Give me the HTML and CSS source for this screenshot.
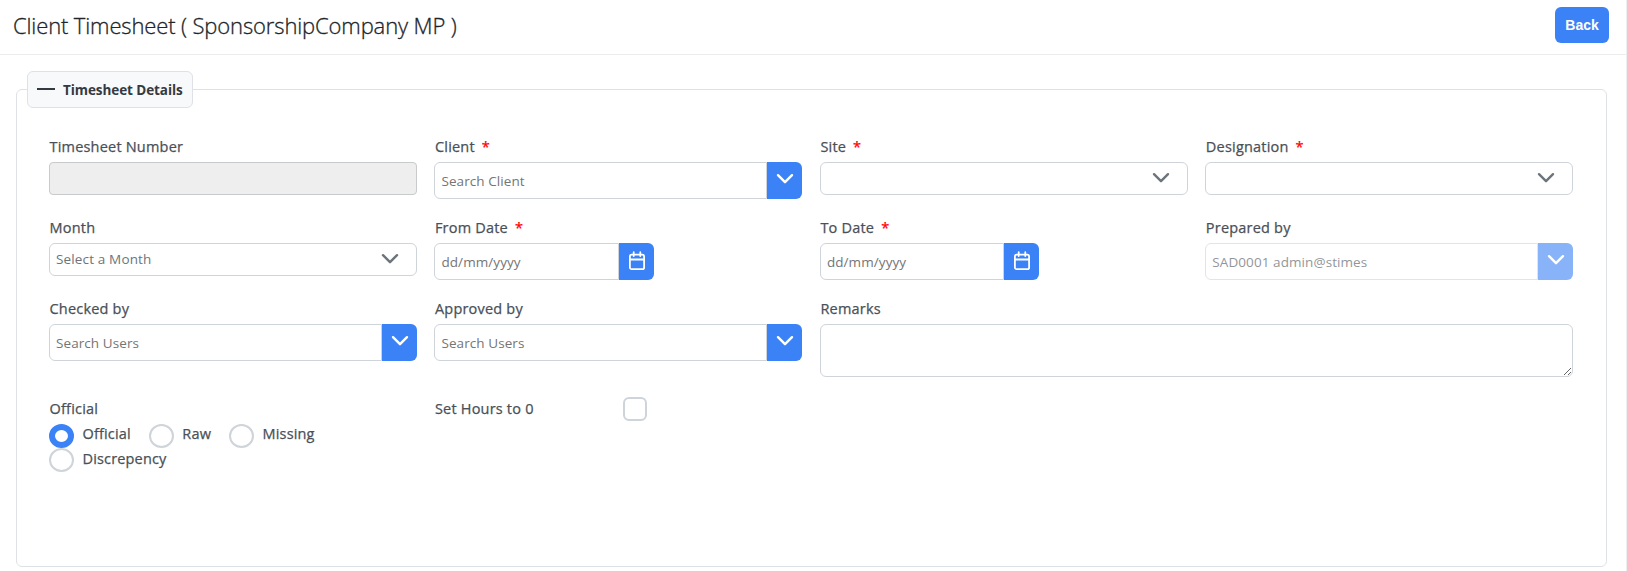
FILE: index.html
```
<!DOCTYPE html>
<html lang="en">
<head>
<meta charset="utf-8">
<title>Client Timesheet</title>
<link rel="stylesheet" href="styles.css">
</head>
<body>
<svg width="0" height="0" class="defs">
  <symbol id="chevron" viewBox="0 0 18 18"><path d="M2 5.2L9 12.2L16 5.2" fill="none" stroke="currentColor" stroke-width="2.4" stroke-linecap="round" stroke-linejoin="round"/></symbol>
  <symbol id="calendar" viewBox="0 0 18 20"><g fill="none" stroke="currentColor" stroke-width="1.8" stroke-linecap="round" stroke-linejoin="round"><rect x="1.9" y="3.6" width="14.2" height="14.6" rx="1.8"/><path d="M2 8.5H16M5.7 1.2V5M12.3 1.2V5"/></g></symbol>
</svg>
<div class="page">
  <header class="header">
    <h1 class="title">Client Timesheet ( SponsorshipCompany MP )</h1>
    <button class="back">Back</button>
  </header>
  <main class="main">
    <section class="panel">
      <button class="legend"><span class="minus"></span><span>Timesheet Details</span></button>
      <form class="grid">
        <div class="field"><label class="label">Timesheet Number</label><input class="input disabled" disabled></div>
        <div class="field"><label class="label">Client <span class="req">*</span></label>
          <div class="group"><input class="input" placeholder="Search Client"><button type="button" class="addon"><svg class="chev"><use href="#chevron"/></svg></button></div></div>
        <div class="field"><label class="label">Site <span class="req">*</span></label><div class="select"><span></span><svg class="chev"><use href="#chevron"/></svg></div></div>
        <div class="field"><label class="label">Designation <span class="req">*</span></label><div class="select"><span></span><svg class="chev"><use href="#chevron"/></svg></div></div>

        <div class="field"><label class="label">Month</label><div class="select"><span>Select a Month</span><svg class="chev"><use href="#chevron"/></svg></div></div>
        <div class="field"><label class="label">From Date <span class="req">*</span></label>
          <div class="group date"><input class="input" placeholder="dd/mm/yyyy"><button type="button" class="addon"><svg class="cal"><use href="#calendar"/></svg></button></div></div>
        <div class="field"><label class="label">To Date <span class="req">*</span></label>
          <div class="group date"><input class="input" placeholder="dd/mm/yyyy"><button type="button" class="addon"><svg class="cal"><use href="#calendar"/></svg></button></div></div>
        <div class="field"><label class="label">Prepared by</label>
          <div class="group faded"><input class="input" value="SAD0001 admin@stimes"><button type="button" class="addon"><svg class="chev"><use href="#chevron"/></svg></button></div></div>

        <div class="field"><label class="label">Checked by</label>
          <div class="group"><input class="input" placeholder="Search Users"><button type="button" class="addon"><svg class="chev"><use href="#chevron"/></svg></button></div></div>
        <div class="field"><label class="label">Approved by</label>
          <div class="group"><input class="input" placeholder="Search Users"><button type="button" class="addon"><svg class="chev"><use href="#chevron"/></svg></button></div></div>
        <div class="field wide"><label class="label">Remarks</label><textarea class="textarea"></textarea></div>

        <div class="field last"><label class="label">Official</label>
          <div class="radios">
            <label class="option"><span class="radio checked"></span><span>Official</span></label>
            <label class="option"><span class="radio"></span><span>Raw</span></label>
            <label class="option"><span class="radio"></span><span>Missing</span></label>
            <label class="option"><span class="radio"></span><span>Discrepency</span></label>
          </div></div>
        <div class="hours last"><label class="label">Set Hours to 0</label><span class="checkbox"></span></div>
      </form>
    </section>
  </main>
</div>
</body>
</html>
```
FILE: styles.css
```
* { box-sizing: border-box; }
body { margin: 0; background: #fff; color: #495057; font-family: "Open Sans", "Noto Sans", sans-serif; font-size: 14.5px; overflow: hidden; }
button { font: inherit; border: 0; padding: 0; }
.defs { position: absolute; }
.page { height: 571px; border-right: 1px solid #eceef2; }
.header { height: 55px; padding: 7px 17px 0 13px; display: flex; justify-content: space-between; align-items: flex-start; border-bottom: 1px solid #ececee; }
.title { margin: 0; font-size: 22px; line-height: 37px; font-weight: 300; color: #212529; letter-spacing: -.13px; white-space: nowrap; -webkit-text-stroke: .3px #212529; }
.back { width: 54px; height: 36px; border-radius: 6px; background: #3b82f6; color: #fff; font: 700 14px/35px "Liberation Sans", Arial, sans-serif; }
.main { padding: 34px 19px 0 16px; }
.panel { height: 478px; border: 1px solid #dee2e6; border-radius: 6px; padding: 0 33px 0 32px; }
.legend { display: flex; align-items: center; gap: 8px; width: 166px; height: 37px; margin: -19px 0 0 -22px; padding: 1px 0 0 9px; background: #f8f9fa; border: 1px solid #dee2e6; border-radius: 6px; font-weight: 700; font-size: 13.5px; letter-spacing: -.08px; color: #343a40; white-space: nowrap; }
.minus { width: 18px; height: 2px; background: #343a40; margin-top: -2px; flex: none; }
.grid { margin-top: 28px; display: grid; grid-template-columns: repeat(4, minmax(0, 1fr)); grid-template-rows: 81px 81px 93px auto; column-gap: 17.8px; }
.wide { grid-column: span 2; }
.field { padding-top: 1px; }
.label { display: block; height: 25px; line-height: 20px; white-space: pre; letter-spacing: .2px; padding-left: .5px; }
.label, .option { -webkit-text-stroke: .25px #495057; }
.req { color: #f00; -webkit-text-stroke-color: #f00; margin-left: 3px; }
.input, .select, .textarea { width: 100%; height: 33px; border: 1px solid #ced4da; border-radius: 6px; background: #fff; padding: 0 6px; font: 13.5px "Open Sans", "Noto Sans", sans-serif; color: #495057; outline: 0; display: block; }
.input { letter-spacing: .08px; }
.input::placeholder { color: #757575; opacity: 1; }
.disabled { background: #eee; border-color: #c9cacb; border-radius: 4px; }
.select { display: flex; align-items: center; justify-content: space-between; padding-right: 17px; color: #6c757d; letter-spacing: .15px; }
.select span { margin-top: -1px; }
.chev { width: 18px; height: 18px; display: block; margin-top: -1px; }
.addon .chev { margin: -3px 0 0 1px; }
.cal { width: 18px; height: 20px; display: block; margin: -2px 0 0 1px; }
.group { display: flex; height: 37px; }
.group .input { height: 37px; flex: 1; min-width: 0; border-radius: 6px 0 0 6px; border-right-color: #ced4da; }
.date { width: 219.5px; }
.addon { width: 35px; flex: none; background: #3b82f6; color: #fff; border-radius: 0 6px 6px 0; display: flex; align-items: center; justify-content: center; }
.faded { opacity: .6; }
.textarea { height: 53px; resize: vertical; }
.last { padding-top: 8px; }
.radios { display: flex; flex-wrap: wrap; width: 310px; letter-spacing: .16px; }
.option { display: flex; align-items: flex-start; height: 24px; gap: 8.5px; margin-right: 18px; line-height: 19px; }
.option:last-child { line-height: 21px; }
.radio { width: 25px; height: 24px; border: 2px solid #ced4da; border-radius: 50%; flex: none; }
.checked { border: 6px solid #3b82f6; }
.hours { display: flex; align-items: flex-start; }
.hours .label { width: 188.5px; }
.checkbox { width: 24px; height: 24px; border: 2px solid #ced4da; border-radius: 6px; margin-top: -2px; }
```
